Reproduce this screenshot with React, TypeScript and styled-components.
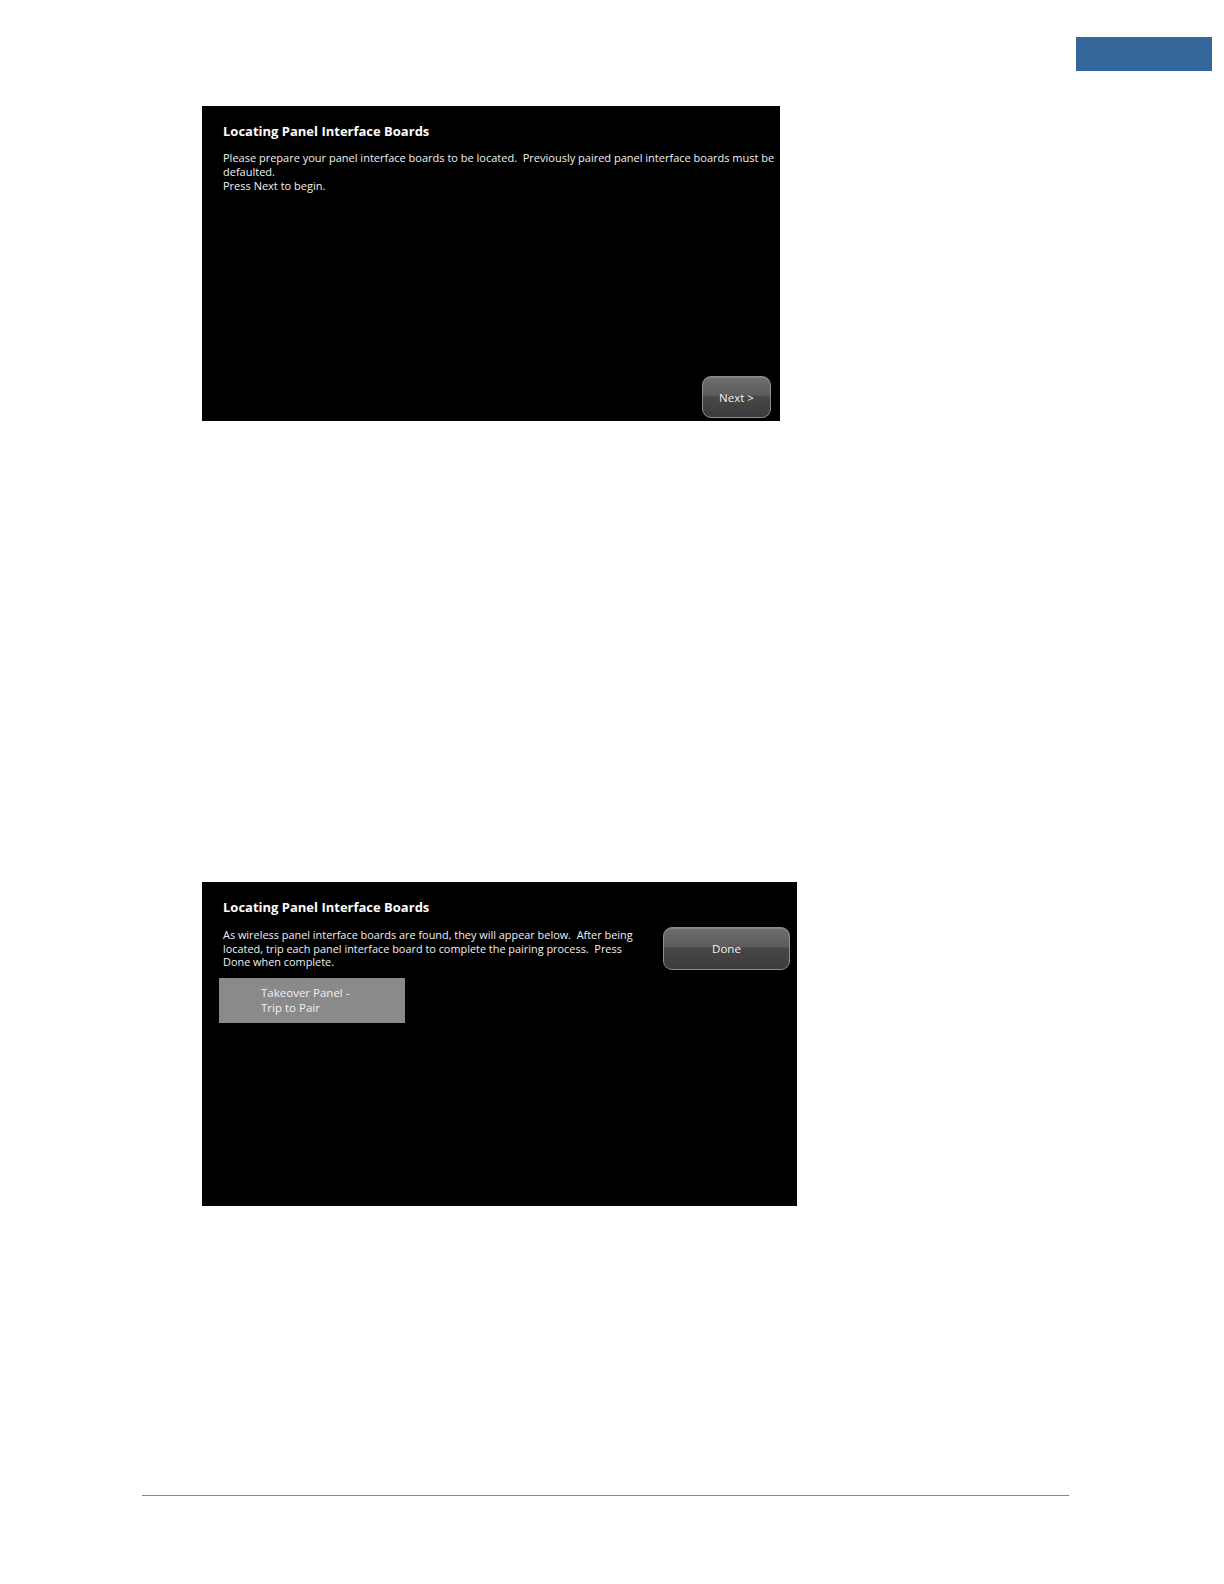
import React from 'react'
import styled, { createGlobalStyle } from 'styled-components'

const GlobalStyle = createGlobalStyle`
  html, body {
    margin: 0;
    padding: 0;
    background: #ffffff;
    overflow: hidden;
  }
  body {
    font-family: 'Open Sans', 'Noto Sans', 'DejaVu Sans', sans-serif;
  }
`

const Page = styled.div`
  width: 100%;
  height: 1584px;
  display: flex;
  flex-direction: column;
  background: #ffffff;
  overflow: hidden;
`

const TopBar = styled.div`
  display: flex;
  justify-content: flex-end;
  padding: 37px 12px 0 0;
`

const SectionTab = styled.div`
  width: 136px;
  height: 34px;
  background: #34679a;
`

const Screen = styled.div<{ $width: number; $height: number; $top: number }>`
  width: ${p => p.$width}px;
  height: ${p => p.$height}px;
  margin: ${p => p.$top}px 0 0 202px;
  background: #000000;
  color: #f2f2f2;
  display: flex;
  flex-direction: column;
  padding: 16px 0 0 21px;
  box-sizing: border-box;
  overflow: hidden;
  flex-shrink: 0;
`

const ScreenTitle = styled.div`
  font-size: 13px;
  font-weight: 700;
  line-height: 18px;
  color: #ffffff;
`

const Message = styled.div<{ $size: number; $line: number }>`
  font-size: ${p => p.$size}px;
  line-height: ${p => p.$line}px;
  white-space: pre;
  color: #f0f0f0;
`

const FirstBody = styled.div`
  flex: 1;
  display: flex;
  flex-direction: column;
  padding-top: 11px;
`

const ButtonRow = styled.div`
  display: flex;
  justify-content: flex-end;
  padding: 0 9px 3px 0;
`

const GlossButton = styled.div<{ $width: number; $height: number }>`
  width: ${p => p.$width}px;
  height: ${p => p.$height}px;
  box-sizing: border-box;
  border-radius: 9px;
  border: 1px solid #8c8c8c;
  background: linear-gradient(
    to bottom,
    #6e6e6e 0%,
    #5c5c5c 45%,
    #474747 50%,
    #3c3c3c 100%
  );
  box-shadow: inset 0 1px 0 rgba(255, 255, 255, 0.15);
  display: flex;
  align-items: center;
  justify-content: center;
  font-size: 11.5px;
  color: #f4f4f4;
  flex-shrink: 0;
`

const TopArea = styled.div`
  display: flex;
  align-items: flex-start;
  justify-content: space-between;
  padding-top: 12px;
`

const DoneSlot = styled.div`
  padding: 0 7px 0 0;
  margin-top: -1px;
`

const PairTile = styled.div`
  width: 186px;
  height: 45px;
  margin: 8px 0 0 -4px;
  background: #8a8a8a;
  box-sizing: border-box;
  padding: 8px 0 0 42px;
  font-size: 11.5px;
  line-height: 14.5px;
  color: #f0f0f0;
`

const Spacer = styled.div<{ $h: number }>`
  height: ${p => p.$h}px;
  flex-shrink: 0;
`

const FooterRule = styled.div`
  width: 927px;
  height: 1px;
  margin-left: 142px;
  background: #6f8bb0;
  flex-shrink: 0;
`

export default function App() {
  return (
    <>
      <GlobalStyle />
      <Page>
        <TopBar>
          <SectionTab />
        </TopBar>

        <Screen $width={578} $height={315} $top={35}>
          <ScreenTitle>Locating Panel Interface Boards</ScreenTitle>
          <FirstBody>
            <Message $size={11} $line={14}>
              {'Please prepare your panel interface boards to be located.  Previously paired panel interface boards must be\ndefaulted.\nPress Next to begin.'}
            </Message>
          </FirstBody>
          <ButtonRow>
            <GlossButton $width={69} $height={42}>Next &gt;</GlossButton>
          </ButtonRow>
        </Screen>

        <Screen $width={595} $height={324} $top={461}>
          <ScreenTitle>Locating Panel Interface Boards</ScreenTitle>
          <TopArea>
            <Message $size={10.9} $line={13.5}>
              {'As wireless panel interface boards are found, they will appear below.  After being\nlocated, trip each panel interface board to complete the pairing process.  Press\nDone when complete.'}
            </Message>
            <DoneSlot>
              <GlossButton $width={127} $height={43}>Done</GlossButton>
            </DoneSlot>
          </TopArea>
          <PairTile>
            Takeover Panel -
            <br />
            Trip to Pair
          </PairTile>
        </Screen>

        <Spacer $h={289} />
        <FooterRule />
      </Page>
    </>
  )
}
